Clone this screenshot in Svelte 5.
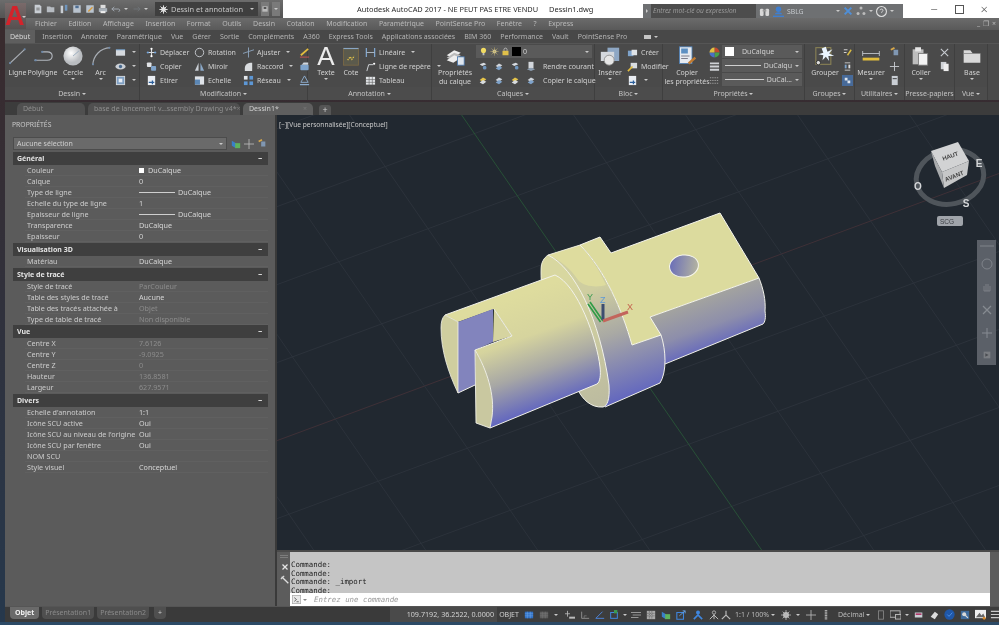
<script>
  const menus = ['Fichier', 'Edition', 'Affichage', 'Insertion', 'Format', 'Outils', 'Dessin', 'Cotation', 'Modification', 'Paramétrique', 'PointSense Pro', 'Fenêtre', '?', 'Express'];
  const tabs = ['Insertion', 'Annoter', 'Paramétrique', 'Vue', 'Gérer', 'Sortie', 'Compléments', 'A360', 'Express Tools', 'Applications associées', 'BIM 360', 'Performance', 'Vault', 'PointSense Pro'];

  const sections = [
    { title: 'Général', rows: [
      ['Couleur', 'DuCalque', 'swatch'], ['Calque', '0'], ['Type de ligne', 'DuCalque', 'line'], ['Echelle du type de ligne', '1'],
      ['Epaisseur de ligne', 'DuCalque', 'line'], ['Transparence', 'DuCalque'], ['Epaisseur', '0']
    ] },
    { title: 'Visualisation 3D', rows: [['Matériau', 'DuCalque']] },
    { title: 'Style de tracé', rows: [
      ['Style de tracé', 'ParCouleur', 'off'], ['Table des styles de tracé', 'Aucune'],
      ['Table des tracés attachée à', 'Objet', 'off'], ['Type de table de tracé', 'Non disponible', 'off']
    ] },
    { title: 'Vue', rows: [
      ['Centre X', '7.6126', 'off'], ['Centre Y', '-9.0925', 'off'], ['Centre Z', '0', 'off'],
      ['Hauteur', '136.8581', 'off'], ['Largeur', '627.9571', 'off']
    ] },
    { title: 'Divers', rows: [
      ["Echelle d'annotation", '1:1'], ['Icône SCU active', 'Oui'], ["Icône SCU au niveau de l'origine", 'Oui'],
      ['Icône SCU par fenêtre', 'Oui'], ['NOM SCU', ''], ['Style visuel', 'Conceptuel']
    ] }
  ];

  // 24 unit icons for the big ribbon tools, 12 unit ones for the small rows
  const icons = {
    ligne: '<path d="M2 21 20 4" stroke="#a9aeb5" stroke-width="1.3"/><circle cx="2.5" cy="20.5" r="1.3" fill="#6d88a8"/><circle cx="20" cy="4" r="1.3" fill="#6d88a8"/>',
    poly: '<path d="M2 17H17C25 17 25 7 17 7H11" fill="none" stroke="#b3b8bf" stroke-width="1.3"/><circle cx="3" cy="17" r="1.4" fill="#6d88a8"/><circle cx="11" cy="7" r="1.4" fill="#6d88a8"/>',
    cercle: '<defs><radialGradient id="cg" cx=".4" cy=".35"><stop offset="0" stop-color="#fff"/><stop offset="1" stop-color="#b9bcc0"/></radialGradient></defs><circle cx="12" cy="12" r="11.5" fill="url(#cg)"/><path d="M12 12 19 6" stroke="#8fa3b8"/>',
    arc: '<path d="M2 23C3 11 11 3 23 2" fill="none" stroke="#a9aeb5" stroke-width="1.4"/><circle cx="2.5" cy="22" r="1.2" fill="#6d88a8"/><circle cx="22" cy="2" r="1.2" fill="#6d88a8"/>',
    cote: '<rect x="3" y="3" width="18" height="20" fill="#5b5a4c" stroke="#7d6a45"/><path d="M3 3H21" stroke="#8aa6c4" stroke-width="1.4"/><path d="M8 17 11 13 13 16 16 12" stroke="#e8c84a" stroke-width="1.6" stroke-dasharray="1.5 1.2" fill="none"/>',
    calque: '<path d="M2 11 11 5 19 8 10 14Z" fill="#eee"/><path d="M2 14 11 8 19 11 10 17Z" fill="#bbb"/><path d="M2 17 11 11 19 14 10 20Z" fill="#eee"/><rect x="15" y="13" width="8" height="10" fill="#dfe6ee" stroke="#4c79ad"/>',
    inserer: '<rect x="9" y="2" width="14" height="16" fill="#8ea7c4"/><rect x="1" y="7" width="16" height="11" fill="#d4d8dd"/><circle cx="11" cy="17" r="6" fill="#e6e6e6" stroke="#888"/>',
    copyprop: '<rect x="3" y="1" width="15" height="20" fill="#e6eaf0" stroke="#4d7fb5"/><rect x="5" y="3" width="8" height="6" fill="#5c8fc2"/><path d="M5 12H15M5 15H13" stroke="#667"/><path d="M14 21 22 14" stroke="#c07a30" stroke-width="3"/>',
    grouper: '<rect x="1" y="2" width="18" height="20" fill="none" stroke="#8a8255" stroke-width="1.3"/><circle cx="4" cy="20" r="2.6" fill="#ddd" stroke="#222"/><path d="M13 1 15 7 21 4 17 9 23 12 16 12 17 18 13 13 9 17 10 11 4 10 10 8 8 3Z" fill="#e9f4ff"/>',
    mesurer: '<path d="M2 9H22M2 6V12M22 6V12" stroke="#c8ccd2" fill="none"/><rect x="2" y="14" width="20" height="3.4" fill="#e2bd3c"/>',
    coller: '<rect x="2" y="4" width="13" height="18" fill="#bdbdbd"/><rect x="5" y="1.5" width="7" height="5" fill="#e6e6e6"/><rect x="9" y="9" width="11" height="14" fill="#f2f2f2" stroke="#777"/>',
    base: '<path d="M2 5H10L13 9H22V20H2Z" fill="#d9d9d9"/><path d="M2 9H22" stroke="#888"/>',

    rect: '<rect x="1" y="3" width="10" height="6.5" fill="#d5d9de"/><path d="M1 3H11" stroke="#6f9ac6"/>',
    eye: '<ellipse cx="6" cy="6" rx="5.5" ry="3.2" fill="#c9ced4"/><circle cx="6" cy="6" r="1.8" fill="#47688d"/>',
    hatch: '<rect x="1.5" y="1.5" width="9" height="9" fill="#7fa0c4" stroke="#d5dbe2"/><rect x="4" y="4" width="4" height="4" fill="#e6edf5"/>',
    move: '<path d="M6 1V11M1 6H11" stroke="#d8dbdf" stroke-width="1.2"/><circle cx="2" cy="6" r="1.2" fill="#73a4da"/><circle cx="10" cy="6" r="1.2" fill="#73a4da"/><circle cx="6" cy="2" r="1.2" fill="#fff"/><circle cx="6" cy="10" r="1.2" fill="#fff"/>',
    copy: '<rect x="1" y="1.5" width="5" height="5" rx="1" fill="#e2e4e7"/><rect x="5.5" y="5.5" width="5.5" height="5" rx="1" fill="#7fa3ca"/>',
    etirer: '<rect x="2" y="1" width="8" height="10" fill="#e9edf2"/><path d="M3 8H9M7 6V10" stroke="#2b5f9c" stroke-width="1.4"/>',
    rotation: '<circle cx="6" cy="6" r="4.6" fill="none" stroke="#c7cbd0" stroke-width="1"/>',
    miroir: '<path d="M1 10.5 5 2V10.5Z" fill="#c9ced4"/><path d="M11 10.5 7 2V10.5Z" fill="#8ba9c9"/>',
    echelle: '<rect x="1" y="1.5" width="10" height="9" fill="#dfe3e8"/><rect x="1" y="5" width="5.5" height="5.5" fill="#5b87b5"/>',
    ajuster: '<path d="M0 7 12 3M6 .5V11.5" stroke="#8da4bd" fill="none"/>',
    raccord: '<path d="M2 11V8C2 4 5 2 10 2V11Z" fill="#d9dcdf"/>',
    reseau: '<rect x="1" y="1" width="4" height="4" fill="#e2e6ea"/><rect x="7" y="1" width="4" height="4" fill="#5d97d5"/><rect x="1" y="7" width="4" height="4" fill="#5d97d5"/><rect x="7" y="7" width="4" height="4" fill="#5d97d5"/>',
    crayon: '<path d="M2 9 10 2" stroke="#e2bc3e" stroke-width="2"/><path d="M1 11H11" stroke="#c55" stroke-width="1"/>',
    decal: '<rect x="1.5" y="4" width="9" height="6" rx="1" fill="#7ea3cb"/><path d="M3 4 5 1.5H10V4" fill="#cfd6de"/>',
    jonct: '<path d="M6 1 10 8H2Z" fill="none" stroke="#8fb0d2"/><path d="M1 10.5H11" stroke="#8fb0d2" stroke-width="1.3"/>',
    lineaire: '<path d="M1.5 1V11M10.5 1V11" stroke="#7ea3cb" stroke-width="1.4"/><path d="M1.5 6H10.5" stroke="#aebccb"/>',
    repere: '<path d="M2 11 4 4H9" fill="none" stroke="#d8dbdf"/><circle cx="10" cy="3" r="1.2" fill="#fff"/>',
    table: '<rect x="1" y="2" width="10" height="8.5" fill="#e2e5e8"/><path d="M1 5H11M1 8H11M4.5 2V11M8 2V11" stroke="#666" stroke-width=".7"/>',
    bulb: '<circle cx="6" cy="4.5" r="3.4" fill="#f1db62"/><rect x="4.8" y="8" width="2.4" height="3" fill="#bbb"/>',
    sun: '<circle cx="6" cy="6" r="2.6" fill="#e8e2b5"/><path d="M6 .5V11.5M.5 6H11.5M2 2 10 10M10 2 2 10" stroke="#b9a86a" stroke-width=".8"/>',
    lock: '<rect x="2" y="5" width="8" height="6" fill="#e0c04a"/><path d="M4 5V3C4 1 8 1 8 3V5" fill="none" stroke="#ccc"/>',
    laya: '<path d="M2 4 7 2 10 4 5 6Z" fill="#d9dde2"/><circle cx="8" cy="8" r="2.2" fill="#6f95bd"/>',
    layb: '<path d="M2 6 6 3 10 5 6 8Z" fill="#cfd4da"/><path d="M2 9 6 6 10 8 6 11Z" fill="#7fa3ca"/>',
    layc: '<path d="M2 6 6 3 10 5 6 8Z" fill="#e6c54a"/><path d="M2 9 6 6 10 8 6 11Z" fill="#d8dcdf"/>',
    sheet: '<rect x="3" y="1" width="6" height="8" fill="#d3d7dc"/><path d="M1 10 6 8 11 10 6 12Z" fill="#8d9eb1"/>',
    creer: '<rect x="1" y="4" width="6" height="6" fill="#7ea3cb"/><rect x="5" y="3" width="6" height="6" fill="#dfe3e7"/>',
    modif: '<rect x="4" y="2" width="7" height="6" fill="#d9dde2"/><path d="M1 11 6 6" stroke="#e2bc3e" stroke-width="1.8"/>',
    wheel: '<path d="M6 6V.5A5.5 5.5 0 0 1 11.5 6Z" fill="#c2482f"/><path d="M6 6H11.5A5.5 5.5 0 0 1 6 11.5Z" fill="#47a04a"/><path d="M6 6V11.5A5.5 5.5 0 0 1 .5 6Z" fill="#4a6fc4"/><path d="M6 6H.5A5.5 5.5 0 0 1 6 .5Z" fill="#e2c042"/>',
    bars: '<path d="M1 2.5H11M1 6H11M1 9.5H11" stroke="#cfd2d6" stroke-width="2"/>',
    dots: '<path d="M1 3H11M1 6H11M1 9H11" stroke="#9a9a9a" stroke-dasharray="1.5 1" stroke-width="1.2"/>',
    ga: '<path d="M2 3H6M2 6H5" stroke="#ddd"/><path d="M6 9 10 3" stroke="#d8bb45" stroke-width="1.6"/>',
    gb: '<path d="M3 2H9M3 10H9" stroke="#ccc"/><rect x="3" y="4" width="2" height="4" fill="#7ea3cb"/><rect x="7" y="4" width="2" height="4" fill="#ddd"/>',
    gc: '<rect x="0" y="0" width="12" height="12" fill="#476a99"/><path d="M3 3H6V6H3ZM6 6H9V9H6Z" fill="#dfe6ee"/>',
    ua: '<rect x="5" y="3" width="5" height="6" fill="#8097b2"/><path d="M2 3 6 1" stroke="#d8a84a" stroke-width="2"/>',
    ub: '<path d="M6 1V11M1 6H11" stroke="#c7cbd0"/>',
    uc: '<rect x="3" y="1" width="6.5" height="10" fill="#c9ced4"/><path d="M4 4H8.5" stroke="#333"/>',
    cut: '<path d="M2 2 10 10M10 2 2 10" stroke="#c7cbd0" stroke-width="1.2"/>',
    dup: '<rect x="2" y="1" width="6" height="8" fill="#cfd2d6"/><rect x="5" y="3" width="5.5" height="8" fill="#eee"/>',
    gblue: '<path d="M1 2H11V10H1Z" fill="#2f6fc4"/><path d="M1 4.5H11M1 7H11M4 2V10M7.5 2V10" stroke="#6aa3e6" stroke-width=".7"/>',
    gdots: '<path d="M1 2H11V10H1Z" fill="#5c5c5c"/><path d="M1 4.5H11M1 7H11M4 2V10M7.5 2V10" stroke="#777" stroke-width=".7"/>',
    snap: '<path d="M3 1V8M0 4.5H6" stroke="#bbb"/><rect x="5" y="8" width="7" height="2.4" fill="#bbb"/>',
    ortho: '<path d="M2 2V10H11" fill="none" stroke="#999"/><path d="M5 10V7H8" fill="none" stroke="#777"/>',
    polar: '<path d="M1 10 9 2M1 10H11" stroke="#4c83d6" stroke-width="1.2" fill="none"/>',
    osnap: '<rect x="2" y="3" width="8" height="7" fill="none" stroke="#3f86de" stroke-width="1.2"/><rect x="6" y="0" width="4" height="4" fill="#3c9a52"/>',
    list: '<path d="M0 3H12M2 6H12M0 9H9" stroke="#aaa"/>',
    check: '<rect x="1" y="1" width="10" height="10" fill="#aaa"/><path d="M1 4H11M1 7H11M4 1V11M7 1V11" stroke="#555" stroke-dasharray="1 1"/>',
    cube: '<path d="M1 2 6 5V11L1 8Z" fill="#3a7fc9"/><rect x="5" y="5" width="6" height="6" fill="#5fb35c"/>',
    share: '<path d="M1 3H9V11H1Z" fill="none" stroke="#3f86de" stroke-width="1.3"/><path d="M4 7 11 1M8 1H11V4" stroke="#6aa9ee" fill="none"/>',
    persA: '<circle cx="6" cy="3" r="2.4" fill="#3f86de"/><path d="M1 11 6 6 11 11" stroke="#3f86de" stroke-width="2" fill="none"/>',
    persB: '<circle cx="6" cy="3" r="2" fill="none" stroke="#bbb"/><path d="M1 11 6 6 11 11M6 5V11" stroke="#bbb" stroke-width="1.2" fill="none"/>',
    persC: '<path d="M6 1V6M1 11 6 6 11 11" stroke="#bbb" stroke-width="1.4" fill="none"/>',
    gear: '<circle cx="6" cy="6" r="3.6" fill="#bbb"/><circle cx="6" cy="6" r="1.3" fill="#444"/><path d="M6 0V12M0 6H12M2 2 10 10M10 2 2 10" stroke="#bbb"/>',
    plus: '<path d="M6 0V12M0 6H12" stroke="#bbb"/>',
    vbar: '<path d="M6 0V12" stroke="#aaa" stroke-width="3" stroke-dasharray="1.4 .6"/>',
    page: '<rect x="3" y="1" width="6" height="10" fill="none" stroke="#888"/>',
    screen: '<rect x="0" y="2" width="11" height="7" fill="none" stroke="#bbb"/><rect x="6" y="6" width="6" height="5" fill="#444" stroke="#bbb"/>',
    iso: '<rect x="1" y="3" width="9" height="6" fill="#c9ced4"/><path d="M2 5 H9" stroke="#b03a6a" stroke-width="2"/>',
    hw: '<path d="M2 8 7 2 11 5 7 11Z" fill="#dcdcdc"/>',
    globe: '<circle cx="6" cy="6" r="5.6" fill="#1f57a8"/><path d="M3.5 6 5.5 8 9 4" stroke="#4f92e6" fill="none"/>',
    clean: '<rect x="1" y="2" width="10" height="8" fill="#ccc"/><circle cx="9" cy="9" r="2.6" fill="#e0a83c"/>',
    world: '<rect x="0" y="1" width="12" height="9" fill="#eee"/><path d="M1 9 5 4 7 7 9 5 11 9Z" fill="#666"/><circle cx="10" cy="10" r="1.6" fill="#d88a2e"/>',
    menu: '<path d="M1 2.5H11M1 6H11M1 9.5H11" stroke="#c9c9c9" stroke-width="1.3"/>',
    doc: '<path d="M2 1H8L10 3V11H2Z" fill="#c9ced4"/><path d="M4 5H8M4 7H8" stroke="#666"/>',
    open: '<path d="M1 3H5L6 4H10V10H1Z" fill="#b7bcc2"/>',
    ddd: '<rect x="2" y="2" width="3" height="9" fill="#c9ced4"/><rect x="7" y="1" width="3" height="7" fill="#6f95bd"/>',
    save: '<rect x="1.5" y="1.5" width="9" height="9" fill="#b9c3ce"/><rect x="4" y="2" width="4" height="3" fill="#4e6e93"/>',
    saveas: '<rect x="1.5" y="1.5" width="9" height="9" fill="#b9c3ce"/><path d="M4 9 9 4" stroke="#d89a38" stroke-width="1.6"/>',
    print: '<rect x="3" y="1" width="6" height="4" fill="#ddd"/><rect x="1" y="5" width="10" height="4.5" fill="#aab2ba"/><rect x="3" y="8.5" width="6" height="2.5" fill="#eee"/>',
    undo: '<path d="M1 6H9C11 6 11 9 9 9M1 6 4 3.5M1 6 4 8.5" fill="none" stroke="#9fa6ae" stroke-width="1.2"/>',
    redo: '<path d="M11 6H3M11 6 8 3.5M11 6 8 8.5" fill="none" stroke="#6e7276" stroke-width="1.2"/>',
    wsgear: '<circle cx="6" cy="6" r="3.2" fill="#e4e4e4"/><circle cx="6" cy="6" r="1.2" fill="#333"/><path d="M6 .5V11.5M.5 6H11.5M2 2 10 10M10 2 2 10" stroke="#e4e4e4" stroke-width="1.3"/>',
    binoc: '<rect x="1" y="3" width="4" height="8" rx="1.5" fill="#d8d8d8"/><rect x="7" y="3" width="4" height="8" rx="1.5" fill="#d8d8d8"/><rect x="4" y="4" width="4" height="2" fill="#999"/>',
    user: '<circle cx="6" cy="3.5" r="3" fill="#3f7fd0"/><path d="M0 11.5H12" stroke="#3f7fd0" stroke-width="2"/><path d="M2 9C2 6 10 6 10 9Z" fill="#3f7fd0"/>',
    xchg: '<path d="M2 2 10 10M10 2 2 10" stroke="#4f8fd8" stroke-width="2.4"/>',
    tri: '<circle cx="6" cy="2.5" r="1.8" fill="#bbb"/><circle cx="2.5" cy="9" r="1.8" fill="#bbb"/><circle cx="9.5" cy="9" r="1.8" fill="#bbb"/>',
    help: '<circle cx="6" cy="6" r="5.4" fill="none" stroke="#dfdfdf" stroke-width="1.2"/><path d="M4.4 4.6C4.6 2.8 7.8 3 7.6 4.8 7.5 6 6 6 6 7.4" fill="none" stroke="#dfdfdf"/>',
    wsave: '<rect x="2" y="2" width="8" height="8" fill="#bbb"/><rect x="4" y="3" width="4" height="3" fill="#555"/>',
    nlock: '<rect x="1" y="1" width="10" height="10" fill="#3f6b9c"/><circle cx="5" cy="5" r="2.4" fill="#d8d8d8"/><path d="M6 6 9.5 9.5" stroke="#d8d8d8" stroke-width="1.3"/>',
    orbit: '<circle cx="6" cy="6" r="5" fill="none" stroke="#c8ccd0" stroke-width=".8"/>',
    navhand: '<path d="M3 10V5M5 10V3M7 10V3M9 10V5M3 10H9" stroke="#b4b7ba" stroke-width=".9" fill="none"/>',
    pagenav: '<rect x="2" y="2" width="8" height="8" fill="#aaa"/><path d="M4 4 8 6 4 8Z" fill="#333"/>',
    prompt: '<rect x=".5" y=".5" width="11" height="11" fill="#e9e9e9" stroke="#aaa"/><path d="M3 3.5 6 6 3 8.5M6 9H9" stroke="#444" fill="none"/>',
    wrench: '<path d="M2 2 10 10" stroke="#ddd" stroke-width="1.6"/><path d="M1 5 5 1" stroke="#ddd" stroke-width="1.4"/>',
    close: '<path d="M3 3 9 9M9 3 3 9" stroke="#e6e6e6" stroke-width="1.5"/>'
  };

  const statusRight = [
    ['gblue', 15], ['gdots', 15], ['~', 10], ['snap', 17], ['ortho', 14], ['polar', 15], ['osnap', 14], ['~', 8],
    ['list', 14], ['check', 15], ['cube', 15], ['share', 15], ['persA', 19], ['persB', 13], ['persC', 12]
  ];

  const gridA = [];
  for (let k = -6; k <= 7; k++) {
    const y = 320 + k * 78;
    gridA.push({ x1: 277, y1: y + 326 * 0.37, x2: 999, y2: y - 396 * 0.37, axis: k === 0 });
  }
  const gridB = [];
  for (let k = -4; k <= 5; k++) {
    const x = 603 + k * 112;
    gridB.push({ x1: x - 205 / 1.45, y1: 115, x2: x + 230 / 1.45, y2: 550, axis: k === 0 });
  }
</script>

{#snippet ic(name, size = 12)}
  <svg class="ic" width={size} height={size} viewBox={size > 14 ? '0 0 24 24' : '0 0 12 12'}>{@html icons[name]}</svg>
{/snippet}

{#snippet big(name, label, caret = true)}
  <div class="big">
    {@render ic(name, 20)}
    <span>{@html label}</span>
    {#if caret}<i class="caret"></i>{/if}
  </div>
{/snippet}

{#snippet small(name, label, caret = false)}
  <div class="small">
    {@render ic(name, 11)}
    {#if label}<span>{label}</span>{/if}
    {#if caret}<i class="caret"></i>{/if}
  </div>
{/snippet}

<div class="app">
  <div class="logo">A<i class="caret"></i></div>

  <div class="titlebar">
    <div class="qa">
      {@render ic('doc', 10)}{@render ic('open', 10)}{@render ic('ddd', 10)}{@render ic('save', 10)}{@render ic('saveas', 10)}{@render ic('print', 10)}{@render ic('undo', 10)}<i class="caret"></i>{@render ic('redo', 10)}<i class="caret"></i>
      <div class="ws">{@render ic('wsgear', 9)}<span>Dessin et annotation</span><i class="caret"></i></div>
      <div class="ws-btn">{@render ic('wsave', 8)}</div>
      <div class="ws-btn"><i class="caret"></i></div>
    </div>
    <div class="wintitle"><span>Autodesk AutoCAD 2017 - NE PEUT PAS ETRE VENDU</span><span>Dessin1.dwg</span></div>
    <div class="search">
      <i class="arrow"></i>
      <div class="search-in">Entrez mot-clé ou expression</div>
      {@render ic('binoc', 11)}{@render ic('user', 11)}
      <span class="user">SBLG</span>
      <i class="caret"></i>
      {@render ic('xchg', 10)}{@render ic('tri', 10)}<i class="caret"></i>
      {@render ic('help', 11)}<i class="caret"></i>
    </div>
    <div class="winbtns"><span>−</span><span class="sq"></span><span>×</span></div>
  </div>

  <div class="menubar">
    {#each menus as m}<span>{m}</span>{/each}
    <div class="menu-right"><b>_</b><b>❐</b><b>×</b></div>
  </div>

  <div class="tabbar">
    <span class="tab active">Début</span>
    {#each tabs as t}<span class="tab">{t}</span>{/each}
    <span class="cam"></span><i class="caret"></i>
  </div>

  <div class="ribbon">
    <section class="panel p-dessin">
      <div class="body">
        <div class="w19">{@render big('ligne', 'Ligne', false)}</div>
        <div class="w31">{@render big('poly', 'Polyligne', false)}</div>
        <div class="w30">{@render big('cercle', 'Cercle')}</div>
        <div class="w25">{@render big('arc', 'Arc')}</div>
        <div class="col">{@render small('rect', '', true)}{@render small('eye', '', true)}{@render small('hatch', '', true)}</div>
      </div>
      <footer>Dessin <i class="caret"></i></footer>
    </section>

    <section class="panel p-modif">
      <div class="body">
        <div class="col w46">{@render small('move', 'Déplacer')}{@render small('copy', 'Copier')}{@render small('etirer', 'Etirer')}</div>
        <div class="col w47">{@render small('rotation', 'Rotation')}{@render small('miroir', 'Miroir')}{@render small('echelle', 'Echelle')}</div>
        <div class="col w54">{@render small('ajuster', 'Ajuster', true)}{@render small('raccord', 'Raccord', true)}{@render small('reseau', 'Réseau', true)}</div>
        <div class="col">{@render small('crayon', '')}{@render small('decal', '')}{@render small('jonct', '')}</div>
      </div>
      <footer>Modification <i class="caret"></i></footer>
    </section>

    <section class="panel p-annot">
      <div class="body">
        <div class="big w26"><span class="bigA">A</span><span>Texte</span><i class="caret"></i></div>
        <div class="w24">{@render big('cote', 'Cote', false)}</div>
        <div class="col">{@render small('lineaire', 'Linéaire', true)}{@render small('repere', 'Ligne de repère', true)}{@render small('table', 'Tableau')}</div>
      </div>
      <footer>Annotation <i class="caret"></i></footer>
    </section>

    <section class="panel p-calques">
      <div class="body">
        <div class="w40">{@render big('calque', 'Propriétés<br>du calque', false)}</div>
        <div class="col grow">
          <div class="laycombo">{@render ic('bulb', 9)}{@render ic('sun', 9)}{@render ic('lock', 9)}<b class="black"></b><span>0</span><i class="caret"></i></div>
          <div class="layrow">{@render ic('laya', 10)}{@render ic('layb', 10)}{@render ic('laya', 10)}{@render ic('sheet', 10)}<span>Rendre courant</span></div>
          <div class="layrow">{@render ic('layc', 10)}{@render ic('layb', 10)}{@render ic('layc', 10)}{@render ic('layb', 10)}<span>Copier le calque</span></div>
        </div>
      </div>
      <footer>Calques <i class="caret"></i></footer>
    </section>

    <section class="panel p-bloc">
      <div class="body">
        <div class="w30">{@render big('inserer', 'Insérer')}</div>
        <div class="col">{@render small('creer', 'Créer')}{@render small('modif', 'Modifier')}{@render small('etirer', '', true)}</div>
      </div>
      <footer>Bloc <i class="caret"></i></footer>
    </section>

    <section class="panel p-props">
      <div class="body">
        <div class="w44">{@render big('copyprop', 'Copier<br>les propriétés', false)}</div>
        <div class="col w13">{@render small('wheel', '')}{@render small('bars', '')}{@render small('dots', '')}</div>
        <div class="col combos">
          <div class="combo"><b class="white"></b><span>DuCalque</span><i class="caret"></i></div>
          <div class="combo"><u></u><span>DuCalqu</span><i class="caret"></i></div>
          <div class="combo"><u></u><span>DuCal...</span><i class="caret"></i></div>
        </div>
      </div>
      <footer>Propriétés <i class="caret"></i></footer>
    </section>

    <section class="panel p-groupes">
      <div class="body">
        <div class="w30">{@render big('grouper', 'Grouper', false)}</div>
        <div class="col">{@render small('ga', '')}{@render small('gb', '')}{@render small('gc', '')}</div>
      </div>
      <footer>Groupes <i class="caret"></i></footer>
    </section>

    <section class="panel p-util">
      <div class="body">
        <div class="w32">{@render big('mesurer', 'Mesurer')}</div>
        <div class="col">{@render small('ua', '')}{@render small('ub', '')}{@render small('uc', '')}</div>
      </div>
      <footer>Utilitaires <i class="caret"></i></footer>
    </section>

    <section class="panel p-clip">
      <div class="body">
        <div class="w32">{@render big('coller', 'Coller')}</div>
        <div class="col">{@render small('cut', '')}{@render small('dup', '')}</div>
      </div>
      <footer>Presse-papiers</footer>
    </section>

    <section class="panel p-vue">
      <div class="body">
        <div class="w30">{@render big('base', 'Base')}</div>
      </div>
      <footer>Vue <i class="caret"></i></footer>
    </section>
  </div>

  <div class="doctabs">
    <div class="dtab t1">Début</div>
    <div class="dtab t2">base de lancement v...ssembly Drawing v4* <em>×</em></div>
    <div class="dtab t3">Dessin1* <em>×</em></div>
    <div class="dplus">+</div>
  </div>

  <div class="main">
    <aside class="props">
      <div class="props-title">PROPRIÉTÉS</div>
      <div class="selrow">
        <div class="sel"><span>Aucune sélection</span><i class="caret"></i></div>
        <div class="selicons">{@render ic('cube', 10)}{@render ic('plus', 10)}{@render ic('ua', 10)}</div>
      </div>
      {#each sections as s}
        <div class="sechead"><span>{s.title}</span><b>−</b></div>
        {#each s.rows as r}
          <div class="row">
            <span class="lab">{r[0]}</span>
            <span class="val" class:off={r[2] === 'off'}>
              {#if r[2] === 'swatch'}<i class="swatch"></i>{/if}
              {#if r[2] === 'line'}<i class="lineval"></i>{/if}
              {r[1]}
            </span>
          </div>
        {/each}
      {/each}
    </aside>

    <div class="work">
      <div class="viewport">
        <svg class="scene" width="722" height="435" viewBox="277 115 722 435">
          <defs>
            <linearGradient id="gFront" gradientUnits="userSpaceOnUse" x1="505" y1="300" x2="545" y2="412">
              <stop offset="0" stop-color="#dedc9e" /><stop offset=".35" stop-color="#d6d49e" /><stop offset=".65" stop-color="#a7a7a5" /><stop offset="1" stop-color="#5a5fc2" />
            </linearGradient>
            <linearGradient id="gFlange" gradientUnits="userSpaceOnUse" x1="605" y1="285" x2="645" y2="400">
              <stop offset="0" stop-color="#cfcea0" /><stop offset=".4" stop-color="#a9a9a4" /><stop offset="1" stop-color="#5a5fc2" />
            </linearGradient>
            <linearGradient id="gBlock" gradientUnits="userSpaceOnUse" x1="690" y1="295" x2="712" y2="356">
              <stop offset="0" stop-color="#a9a99c" /><stop offset=".55" stop-color="#8d8eab" /><stop offset="1" stop-color="#5a5ec2" />
            </linearGradient>
            <linearGradient id="gDisc" gradientUnits="userSpaceOnUse" x1="560" y1="280" x2="600" y2="400">
              <stop offset="0" stop-color="#d8d7a0" /><stop offset="1" stop-color="#bdbca0" />
            </linearGradient>
            <linearGradient id="gHole" gradientUnits="userSpaceOnUse" x1="670" y1="262" x2="698" y2="270">
              <stop offset="0" stop-color="#6a6eb8" /><stop offset="1" stop-color="#b5b5a0" />
            </linearGradient>
          </defs>

          {#each gridA as l}
            <line x1={l.x1} y1={l.y1} x2={l.x2} y2={l.y2} stroke={l.axis ? '#463238' : '#2e353e'} stroke-width=".8" />
          {/each}
          {#each gridB as l}
            <line x1={l.x1} y1={l.y1} x2={l.x2} y2={l.y2} stroke={l.axis ? '#2a5a38' : '#2e353e'} stroke-width=".8" />
          {/each}

          <g stroke-linejoin="round">
            <!-- rear block -->
            <path d="M650 317 759 278C763 288 766 300 765 311C766 318 765 322 763 324L665 364L652 330Z" fill="url(#gBlock)" />
            <path d="M759 278C763 288 766 300 765 311C766 318 765 322 763 324L665 364" fill="none" stroke="#f2f2ea" />

            <!-- flange -->
            <path d="M548 255 580 245C605 270 622 310 632 345L661 335C666 350 667 372 660 383L605 407C595 408 585 400 578 390C555 350 540 300 541 270C541 262 544 258 548 255Z" fill="url(#gFlange)" />
            <path d="M548 255C575 268 600 320 609 385C610 400 607 406 603 407C590 408 582 398 578 390C555 350 540 300 541 270C541 262 544 258 548 255Z" fill="url(#gDisc)" />
            <path d="M548 255 580 245C592 258 600 272 606 285C600 287 585 288 578 280C570 268 560 260 548 255Z" fill="#dedc9e" />
            <path d="M548 255C575 268 600 320 609 385C610 400 607 406 603 407C590 408 582 398 578 390" fill="none" stroke="#f2f2ea" />
            <path d="M661 335C666 350 667 372 660 383L605 407" fill="none" stroke="#f2f2ea" />
            <path d="M578 390C555 350 540 300 541 270C541 262 544 258 548 255L580 245" fill="none" stroke="#f2f2ea" stroke-width=".8" />

            <!-- top face -->
            <path d="M580 245 600 237 611 253 720 213 759 278 650 317 661 335 632 345C622 310 605 270 580 245Z" fill="#dcdb9e" stroke="#f6f6ee" />
            <ellipse cx="684" cy="266" rx="14.5" ry="11" transform="rotate(-8 684 266)" fill="url(#gHole)" stroke="#f6f6ee" />

            <!-- front shaft -->
            <path d="M445 315 555 275C578 285 597 340 600 367C601 375 600 382 597 384L490 428C495 410 490 375 475 350L512 336 494 309 458 322Z" fill="url(#gFront)" />
            <path d="M555 275C578 285 597 340 600 367C601 375 600 382 597 384L490 428M445 315 555 275" fill="none" stroke="#f2f2ea" />
            <path d="M458 322 493 309 493 342 475 350 475 385 458 393Z" fill="#8284bd" />
            <path d="M494 309 512 336 493 342Z" fill="#d6d4a0" />
            <path d="M494 309 512 336 475 350" fill="none" stroke="#f2f2ea" />
            <path d="M445 315 458 322 458 393C448 372 441 350 441 328C441 322 442 318 445 315Z" fill="#cfce9f" stroke="#f2f2ea" stroke-width=".8" />
            <path d="M475 350C487 370 495 395 492 417L490 428 476 423 475 350Z" fill="#c9c8a0" stroke="#f2f2ea" stroke-width=".9" />
            <path d="M458 393 475 385" stroke="#f2f2ea" />
          </g>

          <!-- UCS icon -->
          <g>
            <path d="M603 321 590 302M600.5 322 588 304" stroke="#2f9c46" stroke-width="1.6" />
            <path d="M603 320V304" stroke="#3d4d70" stroke-width="3" />
            <path d="M603 321 628 312" stroke="#c2655c" stroke-width="3" />
            <text x="600" y="303" class="ucs z">Z</text>
            <text x="587" y="300" class="ucs y">Y</text>
            <text x="627" y="310" class="ucs x">X</text>
          </g>

          <!-- view cube -->
          <g>
            <ellipse cx="950" cy="177" rx="34" ry="27" transform="rotate(-12 950 177)" fill="none" stroke="#4f555b" stroke-width="5" />
            <path d="M931 151 958 142 969 161 942 172Z" fill="#d2d3d4" />
            <path d="M942 172 969 161 967 175 944 188Z" fill="#c6c7c8" />
            <path d="M931 151 942 172 944 188 935 166Z" fill="#a9abad" />
            <text x="951" y="158" transform="rotate(-20 951 158)" class="cube" text-anchor="middle">HAUT</text>
            <text x="955" y="178" transform="rotate(-22 955 178)" class="cube" text-anchor="middle">AVANT</text>
            <text x="979" y="167" class="dir" text-anchor="middle">E</text>
            <text x="966" y="207" class="dir" text-anchor="middle">S</text>
            <text x="918" y="190" class="dir" text-anchor="middle">O</text>
            <rect x="937" y="216" width="26" height="10" rx="2" fill="#a0a4aa" />
            <text x="940" y="224" class="scg">SCG</text>
          </g>
        </svg>

        <div class="vlabel">[−][Vue personnalisée][Conceptuel]</div>

        <div class="navbar">
          <i class="grip"></i>
          {@render ic('orbit', 12)}
          {@render ic('navhand', 12)}
          {@render ic('cut', 12)}
          {@render ic('ub', 12)}
          {@render ic('pagenav', 10)}
        </div>
      </div>

      <div class="cmd">
        <div class="cmd-side">
          <i class="cmd-grip"></i>
          {@render ic('close', 10)}
          {@render ic('wrench', 10)}
        </div>
        <div class="cmd-main">
          <pre class="cmd-log">Commande:
Commande:
Commande: _import
Commande:</pre>
          <div class="cmd-input">
            {@render ic('prompt', 9)}<i class="caret dark"></i>
            <span>Entrez une commande</span>
          </div>
        </div>
      </div>
    </div>
  </div>

  <div class="statusbar">
    <div class="layouts">
      <div class="ltab on">Objet</div>
      <div class="ltab">Présentation1</div>
      <div class="ltab">Présentation2</div>
      <div class="ltab plus">+</div>
    </div>
    <div class="coords">109.7192, 36.2522, 0.0000</div>
    <div class="objet">OBJET</div>
    {#each statusRight as [name, w]}
      <div class="slot" style="width:{w}px">
        {#if name === '~'}<i class="caret"></i>{:else}{@render ic(name, 10)}{/if}
      </div>
    {/each}
    <div class="stext scale">1:1 / 100% <i class="caret"></i></div>
    <div class="slot s16">{@render ic('gear', 10)}</div>
    <div class="slot s10"><i class="caret"></i></div>
    <div class="slot s16">{@render ic('plus', 10)}</div>
    <div class="slot s16">{@render ic('vbar', 10)}</div>
    <div class="stext dec">Décimal <i class="caret"></i></div>
    <div class="slot s14">{@render ic('page', 10)}</div>
    <div class="slot s14">{@render ic('screen', 11)}</div>
    <div class="slot s10"><i class="caret"></i></div>
    <div class="slot s14">{@render ic('iso', 10)}</div>
    <div class="slot s16">{@render ic('hw', 10)}</div>
    <div class="slot s16">{@render ic('globe', 11)}</div>
    <div class="slot s16">{@render ic('nlock', 10)}</div>
    <div class="slot s16">{@render ic('world', 11)}</div>
    <div class="slot s16">{@render ic('menu', 11)}</div>
  </div>
</div>

<style>
  :global(body) {
    margin: 0;
    background: #2a2c33;
  }

  .app {
    position: relative;
    width: 999px;
    height: 625px;
    overflow: hidden;
    display: flex;
    flex-direction: column;
    padding-left: 5px;
    box-sizing: border-box;
    background: linear-gradient(#3a2a2c, #26384c);
    border-bottom: 3px solid #2c4a66;
    font-family: 'Noto Sans', 'Open Sans', sans-serif;
    font-size: 7px;
    color: #c9c9c9;
    filter: blur(0.3px);
  }

  .ic {
    display: block;
    flex: none;
  }

  .caret {
    display: inline-block;
    flex: none;
    width: 0;
    height: 0;
    border-left: 2px solid transparent;
    border-right: 2px solid transparent;
    border-top: 2px solid #c9c9c9;
    vertical-align: middle;
  }

  .caret.dark {
    border-top-color: #888;
  }

  .logo {
    position: absolute;
    left: 5px;
    top: 3px;
    width: 21px;
    height: 26px;
    background: linear-gradient(#7a6a6a, #565050);
    color: #d5222a;
    font: bold 27px/27px 'Liberation Sans', sans-serif;
    z-index: 2;
  }

  .logo .caret {
    position: absolute;
    right: 0;
    top: 13px;
  }

  .titlebar {
    height: 18px;
    flex: none;
    display: flex;
    align-items: stretch;
    background: #fff;
    margin-left: -5px;
  }

  .qa {
    width: 283px;
    flex: none;
    box-sizing: border-box;
    padding-left: 33px;
    display: flex;
    align-items: center;
    gap: 3px;
    background: linear-gradient(#6c6c6c, #535353);
  }

  .ws {
    width: 103px;
    height: 14px;
    margin-left: 4px;
    flex: none;
    display: flex;
    align-items: center;
    gap: 3px;
    box-sizing: border-box;
    padding: 0 4px;
    background: #3f3f3f;
    color: #c8c8c8;
    font-size: 7.4px;
  }

  .ws span {
    flex: 1;
    white-space: nowrap;
  }

  .ws-btn {
    width: 8px;
    height: 14px;
    display: flex;
    align-items: center;
    justify-content: center;
    background: #7a7a7a;
  }

  .wintitle {
    margin-left: 74px;
    display: flex;
    gap: 11px;
    align-items: center;
    color: #2a2a2a;
    font-size: 7.4px;
    white-space: nowrap;
  }

  .search {
    margin-left: auto;
    width: 260px;
    flex: none;
    box-sizing: border-box;
    margin-top: 4px;
    padding-left: 3px;
    display: flex;
    align-items: center;
    gap: 3px;
    background: #6e7072;
  }

  .arrow {
    width: 0;
    height: 0;
    border-top: 2px solid transparent;
    border-bottom: 2px solid transparent;
    border-left: 2px solid #ccc;
  }

  .search-in {
    width: 105px;
    height: 100%;
    box-sizing: border-box;
    padding-left: 2px;
    background: #4d4d4d;
    color: #9a9a9a;
    font-style: italic;
    font-size: 6.6px;
    line-height: 14px;
  }

  .user {
    width: 46px;
    color: #c4c8cc;
    font-size: 6.8px;
  }

  .winbtns {
    width: 96px;
    flex: none;
    display: flex;
    align-items: center;
    justify-content: flex-end;
    gap: 17px;
    padding-right: 11px;
    box-sizing: border-box;
    color: #555;
    font-size: 13px;
    font-weight: 300;
  }

  .sq {
    width: 7px;
    height: 7px;
    border: 1px solid #555;
  }

  .menubar {
    height: 12px;
    flex: none;
    display: flex;
    align-items: center;
    gap: 11.6px;
    padding-left: 30px;
    background: linear-gradient(#6b6b6b, #595959);
    color: #b9b9b9;
    line-height: 12px;
    white-space: nowrap;
  }

  .menu-right {
    margin-left: auto;
    display: flex;
    gap: 3px;
    padding-right: 3px;
    color: #bbb;
  }

  .menu-right b {
    font-weight: normal;
  }

  .tabbar {
    height: 13px;
    flex: none;
    display: flex;
    align-items: center;
    background: #484848;
    white-space: nowrap;
    gap: 9px;
  }

  .tab {
    color: #b4b4b4;
    line-height: 13px;
  }

  .tab.active {
    background: #5e5e5e;
    color: #d8d8d8;
    padding: 0 5px;
    margin-right: -2px;
  }

  .cam {
    width: 7px;
    height: 4px;
    margin-left: 8px;
    background: #c5c5c5;
    margin-right: -6px;
  }

  .ribbon {
    height: 57px;
    flex: none;
    display: flex;
    background: #4a4a4a;
    border-top: 1px solid #555;
    box-sizing: border-box;
  }

  .panel {
    flex: none;
    display: flex;
    flex-direction: column;
    box-sizing: border-box;
    border-right: 1px solid #3f3f3f;
    --pad: 0px;
    padding-left: var(--pad);
  }

  .p-dessin { width: 135px; --pad: 3px; }
  .p-modif { width: 168px; --pad: 4px; }
  .p-annot { width: 124px; --pad: 5px; }
  .p-calques { width: 163px; --pad: 4px; }
  .p-bloc { width: 68px; }
  .p-props { width: 142px; --pad: 2px; }
  .p-groupes { width: 50px; --pad: 5px; }
  .p-util { width: 50px; }
  .p-clip { width: 50px; }
  .p-vue { width: 33px; --pad: 2px; }

  .body {
    height: 43px;
    flex: none;
    display: flex;
    align-items: stretch;
    padding-top: 1px;
    box-sizing: border-box;
  }

  footer {
    flex: 1;
    text-align: center;
    line-height: 13px;
    color: #c3c3c3;
    background: #4c4c4c;
    margin-left: calc(0px - var(--pad));
    white-space: nowrap;
  }

  .big {
    width: 100%;
    display: flex;
    flex-direction: column;
    align-items: center;
    text-align: center;
    line-height: 9px;
    color: #d2d2d2;
    white-space: nowrap;
  }

  .big :global(svg) {
    margin: 1px 0 2px;
  }

  .big .caret {
    margin-top: 1px;
  }

  .bigA {
    font: 26px/23px 'Liberation Sans', sans-serif;
    color: #ececec;
    height: 23px;
  }

  .w13 { width: 12px; flex: none; padding-left: 0; }
  .w19 { width: 19px; flex: none; }
  .w24 { width: 24px; flex: none; }
  .w25 { width: 25px; flex: none; }
  .w26 { width: 26px; flex: none; }
  .w30 { width: 30px; flex: none; }
  .w31 { width: 31px; flex: none; }
  .w32 { width: 32px; flex: none; }
  .w40 { width: 38px; flex: none; }
  .w44 { width: 44px; flex: none; }
  .w46 { width: 46px; flex: none; }
  .w47 { width: 47px; flex: none; }
  .w54 { width: 54px; flex: none; }

  .col {
    display: flex;
    flex-direction: column;
    flex: none;
    padding-left: 2px;
  }

  .col.w13 {
    padding-left: 0;
  }

  .col.grow {
    flex: 1;
  }

  .small, .layrow, .laycombo, .combo {
    height: 14px;
    display: flex;
    align-items: center;
    gap: 3px;
    white-space: nowrap;
    color: #d0d0d0;
  }

  .small .caret {
    margin-left: 3px;
  }

  .layrow span {
    margin-left: 1px;
  }

  .layrow {
    gap: 6px;
    padding-left: 2px;
  }

  .laycombo {
    height: 13px;
    margin: 0 4px 1px 0;
    padding: 0 3px;
    background: #5a5a5a;
    gap: 2px;
  }

  .laycombo .caret {
    margin-left: auto;
  }

  .black {
    width: 9px;
    height: 9px;
    background: #000;
  }

  .col.combos {
    width: 80px;
    padding-left: 1px;
    box-sizing: content-box;
  }

  .combo {
    height: 13px;
    margin-bottom: 1px;
    padding: 0 3px;
    background: #5a5a5a;
  }

  .combo .caret {
    margin-left: auto;
  }

  .combo u {
    flex: 1;
    height: 1px;
    background: #cfcfcf;
  }

  .white {
    width: 9px;
    height: 9px;
    margin-right: 5px;
    background: #fff;
  }

  .doctabs {
    height: 13px;
    margin-top: 2px;
    flex: none;
    display: flex;
    align-items: flex-end;
    background: #3c3c3c;
    padding-left: 12px;
    gap: 3px;
  }

  .dtab {
    height: 12px;
    box-sizing: border-box;
    padding: 0 6px 0 6px;
    border-radius: 5px 5px 0 0;
    background: #505050;
    color: #8f8f8f;
    line-height: 12px;
    white-space: nowrap;
    display: flex;
    justify-content: space-between;
  }

  .dtab em {
    font-style: normal;
    color: #777;
  }

  .t1 { width: 68px; }
  .t2 { width: 152px; }
  .t3 { width: 70px; background: #5f5f5f; color: #cfcfcf; }

  .dplus {
    width: 12px;
    height: 10px;
    margin-left: 3px;
    border-radius: 3px 3px 0 0;
    background: #555;
    color: #ccc;
    text-align: center;
    line-height: 10px;
    font-size: 9px;
  }

  .main {
    flex: 1;
    min-height: 0;
    display: flex;
    background: #3a3a3a;
  }

  .props {
    width: 270px;
    flex: none;
    box-sizing: border-box;
    padding: 0 7px 0 8px;
    background: #5b5b5b;
  }

  .props-title {
    height: 22px;
    line-height: 19px;
    color: #c8c8c8;
    font-size: 6.8px;
    margin-left: -1px;
  }

  .selrow {
    height: 13px;
    margin-bottom: 2px;
    display: flex;
  }

  .sel {
    width: 214px;
    flex: none;
    box-sizing: border-box;
    padding: 0 3px;
    display: flex;
    align-items: center;
    justify-content: space-between;
    background: #6a6a6a;
    border: 1px solid #4c4c4c;
    color: #cfcfcf;
  }

  .selicons {
    flex: 1;
    display: flex;
    justify-content: space-around;
    align-items: center;
    padding-left: 2px;
  }

  .sechead {
    height: 13px;
    margin-top: .8px;
    box-sizing: border-box;
    padding: 0 6px 0 4px;
    display: flex;
    justify-content: space-between;
    align-items: center;
    background: #3f3f3f;
    color: #e4e4e4;
    font-weight: 700;
    font-size: 7px;
  }

  .selrow + .sechead {
    margin-top: 0;
  }

  .row {
    height: 11px;
    box-sizing: border-box;
    margin-left: 12px;
    display: grid;
    grid-template-columns: 114px 1fr;
    align-items: center;
    line-height: 11px;
    border-bottom: 1px solid #606060;
    white-space: nowrap;
    font-size: 7.2px;
  }

  .lab {
    color: #cccccc;
    padding-left: 2px;
  }

  .val {
    color: #d6d6d6;
    display: flex;
    align-items: center;
    gap: 3px;
  }

  .val.off {
    color: #8c8c8c;
  }

  .swatch {
    width: 5px;
    height: 5px;
    margin-right: 1px;
    background: #fff;
  }

  .lineval {
    width: 36px;
    height: 1px;
    background: #cfcfcf;
  }

  .work {
    flex: 1;
    min-width: 0;
    margin-left: 2px;
    display: flex;
    flex-direction: column;
  }

  .viewport {
    position: relative;
    height: 435px;
    flex: none;
    background: #212830;
    overflow: hidden;
  }

  .scene {
    display: block;
  }

  .ucs {
    font: 9px 'Liberation Sans', sans-serif;
  }

  .z { fill: #5f9ad6; }
  .y { fill: #3f9d55; }
  .x { fill: #c5624e; }

  .cube {
    font: bold 6px 'Liberation Sans', sans-serif;
    fill: #444;
  }

  .dir {
    font: bold 10px 'Liberation Sans', sans-serif;
    fill: #d5d7d9;
  }

  .scg {
    font: 6.5px 'Liberation Sans', sans-serif;
    fill: #3c3f44;
  }

  .vlabel {
    position: absolute;
    left: 2px;
    top: 5px;
    color: #c9c9c9;
    font-size: 6.6px;
    white-space: nowrap;
  }

  .navbar {
    position: absolute;
    left: 700px;
    top: 125px;
    width: 19px;
    height: 125px;
    box-sizing: border-box;
    padding: 5px 0;
    display: flex;
    flex-direction: column;
    align-items: center;
    justify-content: space-between;
    background: #5b6068;
  }

  .navbar :global(svg) {
    opacity: .4;
  }

  .grip {
    width: 14px;
    height: 2px;
    background: #6d7279;
  }

  .cmd {
    height: 56px;
    flex: none;
    display: flex;
    border-top: 2px solid #4a4a4a;
    box-sizing: border-box;
  }

  .cmd-side {
    width: 13px;
    flex: none;
    box-sizing: border-box;
    padding: 3px 0 0 3px;
    display: flex;
    flex-direction: column;
    gap: 3px;
    background: #5c5c5c;
  }

  .cmd-grip {
    width: 8px;
    height: 4px;
    background: repeating-linear-gradient(#7d7d7d 0 1px, #5c5c5c 1px 2px);
  }

  .cmd-main {
    flex: 1;
    min-width: 0;
    display: flex;
    flex-direction: column;
    padding-right: 9px;
    background: #5c5c5c;
  }

  .cmd-log {
    flex: 1;
    min-height: 0;
    margin: 0;
    padding: 9px 0 0 1px;
    overflow: hidden;
    background: #c5c5c5;
    color: #1e1e1e;
    font: 7.4px/8.7px 'DejaVu Sans Mono', 'Liberation Mono', monospace;
  }

  .cmd-input {
    height: 13px;
    flex: none;
    display: flex;
    align-items: center;
    gap: 2px;
    padding-left: 2px;
    background: #fff;
  }

  .cmd-input span {
    margin-left: 5px;
    color: #9a9a9a;
    font: italic 7.4px 'DejaVu Sans Mono', 'Liberation Mono', monospace;
  }

  .statusbar {
    height: 16px;
    flex: none;
    display: flex;
    align-items: center;
    background: #3d3d3d;
    white-space: nowrap;
    border-top: 1px solid #555;
    box-sizing: border-box;
  }

  .layouts {
    width: 385px;
    flex: none;
    height: 100%;
    display: flex;
    gap: 3px;
    padding-left: 5px;
    box-sizing: border-box;
    background: #3a3a3a;
  }

  .ltab {
    height: 12px;
    padding: 0 3px;
    border-radius: 0 0 4px 4px;
    background: #4f4f4f;
    color: #8a8a8a;
    line-height: 12px;
  }

  .ltab.on {
    background: #6a6a6a;
    color: #f0f0f0;
    font-weight: 700;
    padding: 0 5px;
  }

  .ltab.plus {
    color: #ccc;
    padding: 0 4px;
    margin-left: 2px;
  }

  .coords {
    width: 107px;
    flex: none;
    text-align: right;
    padding-right: 3px;
    box-sizing: border-box;
    height: 100%;
    line-height: 15px;
    background: #4a4a4a;
    color: #d2d2d2;
    font-size: 7.2px;
  }

  .objet {
    width: 24px;
    flex: none;
    text-align: center;
    color: #d2d2d2;
    font-size: 7px;
  }

  .slot {
    flex: none;
    height: 100%;
    display: flex;
    align-items: center;
    justify-content: center;
  }

  .s10 { width: 10px; }
  .s14 { width: 14px; }
  .s16 { width: 15.4px; }

  .stext {
    flex: none;
    color: #b9b9b9;
    font-size: 7px;
    text-align: center;
  }

  .scale { width: 46px; }
  .dec { width: 40px; }
</style>
